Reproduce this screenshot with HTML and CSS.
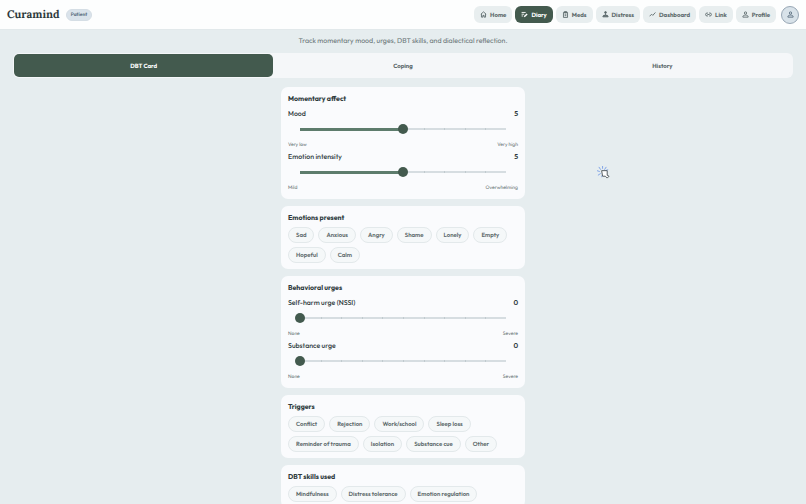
FILE: index.html
```
<!DOCTYPE html>
<html lang="en">
<head>
  <meta charset="UTF-8">
  <meta name="viewport" content="width=device-width, initial-scale=1.0">
  <title>Curamind - Diary</title>
  <link rel="stylesheet" href="styles.css">
</head>
<body>
  <header class="topbar">
    <div class="brand">
      <span class="brand-name">Curamind</span>
      <span class="role">Patient</span>
    </div>
    <nav class="nav">
      <a href="#home"><svg viewBox="0 0 24 24"><path d="M3 11l9-8 9 8M5 10v11h5v-6h4v6h5V10"/></svg>Home</a>
      <a href="#diary" class="active"><svg viewBox="0 0 24 24"><path d="M2 5h14M2 11h9M2 17h5"/><path class="pen" d="M11 20l10-10"/></svg>Diary</a>
      <a href="#meds"><svg viewBox="0 0 24 24"><path d="M5 5h14v17H5zM8 2h8v4H8zM9 11h6M9 16h6"/></svg>Meds</a>
      <a href="#distress"><svg viewBox="0 0 24 24"><circle class="solid" cx="12" cy="5" r="3"/><path d="M12 8v8"/><path class="solid" d="M3 20c0-4 3-6 6-6l3 3 3-3c3 0 6 2 6 6z"/></svg>Distress</a>
      <a href="#dashboard"><svg viewBox="0 0 24 24"><path d="M2 18l7-7 4 4 9-10"/></svg>Dashboard</a>
      <a href="#link"><svg viewBox="0 0 24 24"><path d="M10 7H7a5 5 0 0 0 0 10h3M14 7h3a5 5 0 0 1 0 10h-3M8 12h8"/></svg>Link</a>
      <a href="#profile"><svg viewBox="0 0 24 24"><circle cx="12" cy="7" r="4"/><path d="M3 21v-2c0-3 5-5 9-5s9 2 9 5v2z"/></svg>Profile</a>
      <button type="button" class="avatar" aria-label="Account"><svg viewBox="0 0 24 24"><circle cx="12" cy="7" r="4"/><path d="M3 21v-2c0-3 5-5 9-5s9 2 9 5v2z"/></svg></button>
    </nav>
  </header>

  <main>
    <p class="intro">Track momentary mood, urges, DBT skills, and dialectical reflection.</p>
    <div class="tabs" role="tablist">
      <button type="button" role="tab" aria-selected="true">DBT Card</button>
      <button type="button" role="tab" aria-selected="false">Coping</button>
      <button type="button" role="tab" aria-selected="false">History</button>
    </div>

    <div class="cards">
      <section class="card">
        <h2>Momentary affect</h2>
        <div class="field">
          <div class="field-head"><label for="mood">Mood</label><output for="mood">5</output></div>
          <input type="range" id="mood" min="0" max="10" value="5" style="--fill: 50%">
          <div class="scale"><span>Very low</span><span>Very high</span></div>
        </div>
        <div class="field">
          <div class="field-head"><label for="intensity">Emotion intensity</label><output for="intensity">5</output></div>
          <input type="range" id="intensity" min="0" max="10" value="5" style="--fill: 50%">
          <div class="scale"><span>Mild</span><span>Overwhelming</span></div>
        </div>
      </section>

      <section class="card">
        <h2>Emotions present</h2>
        <div class="chips">
          <button type="button">Sad</button>
          <button type="button">Anxious</button>
          <button type="button">Angry</button>
          <button type="button">Shame</button>
          <button type="button">Lonely</button>
          <button type="button">Empty</button>
          <button type="button">Hopeful</button>
          <button type="button">Calm</button>
        </div>
      </section>

      <section class="card">
        <h2>Behavioral urges</h2>
        <div class="field">
          <div class="field-head"><label for="nssi">Self-harm urge (NSSI)</label><output for="nssi">0</output></div>
          <input type="range" id="nssi" min="0" max="10" value="0" style="--fill: 0%">
          <div class="scale"><span>None</span><span>Severe</span></div>
        </div>
        <div class="field">
          <div class="field-head"><label for="substance">Substance urge</label><output for="substance">0</output></div>
          <input type="range" id="substance" min="0" max="10" value="0" style="--fill: 0%">
          <div class="scale"><span>None</span><span>Severe</span></div>
        </div>
      </section>

      <section class="card">
        <h2>Triggers</h2>
        <div class="chips">
          <button type="button">Conflict</button>
          <button type="button">Rejection</button>
          <button type="button">Work/school</button>
          <button type="button">Sleep loss</button>
          <button type="button">Reminder of trauma</button>
          <button type="button">Isolation</button>
          <button type="button">Substance cue</button>
          <button type="button">Other</button>
        </div>
      </section>

      <section class="card">
        <h2>DBT skills used</h2>
        <div class="chips">
          <button type="button">Mindfulness</button>
          <button type="button">Distress tolerance</button>
          <button type="button">Emotion regulation</button>
        </div>
      </section>
    </div>
  </main>

  <svg class="pointer" viewBox="0 0 14 14" aria-hidden="true">
    <path class="rays" d="M6 0v3M2 1l2 3M0 5l3 1M1 10l3-2M10 1L8 4M12 4L9 5M5 12l1-3"/>
    <path class="hand" d="M5 5h6v5l2 1-2 2-2-2H6z"/>
  </svg>
</body>
</html>
```
FILE: styles.css
```
* {
  box-sizing: border-box;
}

body {
  margin: 0;
  background: #e6edef;
  color: #2e3a3c;
  font-family: Outfit, Lato, "Open Sans", sans-serif;
  font-size: 6px;
  line-height: 10px;
  text-rendering: geometricPrecision;
}

button {
  font: inherit;
  color: inherit;
  text-rendering: inherit;
  cursor: pointer;
}

.topbar {
  display: flex;
  align-items: center;
  justify-content: space-between;
  height: 30px;
  padding: 0 7px;
  background: #fdfefe;
  border-bottom: 1px solid #e2e9eb;
}

.brand {
  display: flex;
  align-items: center;
  gap: 6px;
}

.brand-name {
  font-family: Lora, "Liberation Serif", serif;
  font-size: 11px;
  line-height: 16px;
  font-weight: 700;
}

.role {
  padding: 0 4px;
  border: 1px solid #d5dee5;
  border-radius: 6px;
  background: #dae3eb;
  color: #566a7c;
  font-size: 5px;
  font-weight: 600;
}

.nav {
  display: flex;
  align-items: center;
  gap: 3px;
}

.nav a {
  display: flex;
  align-items: center;
  gap: 3px;
  height: 17px;
  padding: 0 6px;
  border-radius: 6px;
  background: #e8eeef;
  color: #5c696b;
  font-weight: 700;
  text-decoration: none;
}

.nav a.active {
  background: #435a4e;
  color: #fff;
}

.nav svg {
  width: 7px;
  height: 7px;
  fill: none;
  stroke: currentColor;
  stroke-width: 3;
}

.nav .solid {
  fill: currentColor;
}

.nav .pen {
  stroke-width: 5;
}

.avatar {
  display: flex;
  align-items: center;
  justify-content: center;
  width: 18px;
  height: 18px;
  margin-left: 2px;
  padding: 0;
  border: 1px solid #98a7b5;
  border-radius: 50%;
  background: #d8e2e9;
  color: #566a7c;
}

main {
  padding: 6px 13px 12px;
}

.intro {
  margin: 0 0 7px;
  color: #687476;
  font-size: 7px;
  text-align: center;
}

.tabs {
  display: grid;
  grid-template-columns: repeat(3, 1fr);
  padding: 1px;
  border-radius: 6px;
  background: #f5f7f9;
}

.tabs button {
  height: 23px;
  padding: 0;
  border: 0;
  border-radius: 5px;
  background: none;
  color: #5c696b;
  font-weight: 700;
}

.tabs button[aria-selected="true"] {
  background: #435a4e;
  color: #fff;
}

.cards {
  display: grid;
  gap: 7px;
  max-width: 244px;
  margin: 9px auto 0;
}

.card {
  padding: 7px 7px 6px;
  border-radius: 7px;
  background: #fafbfd;
}

.card h2 {
  margin: 0 0 4px;
  font-size: 7px;
  line-height: 10px;
  font-weight: 700;
}

.field-head,
.scale {
  display: flex;
  justify-content: space-between;
}

.field + .field {
  margin-top: 1px;
}

.field-head {
  font-size: 7px;
  line-height: 11px;
  font-weight: 500;
}

.field-head output {
  font-weight: 600;
}

.scale {
  color: #667274;
  font-size: 5px;
  line-height: 10px;
}

input[type="range"] {
  appearance: none;
  display: block;
  width: calc(100% - 14px);
  height: 10px;
  margin: 5px 7px 6px;
  background: none;
}

/* coloured part over a thin line with ten steps */
input[type="range"]::-webkit-slider-runnable-track {
  height: 10px;
  background:
    linear-gradient(#5d7c6c, #5d7c6c) 5px 4px / calc(var(--fill) - 5px) 3px no-repeat,
    repeating-linear-gradient(90deg, #c0cace 0 1px, transparent 1px 10%) 5px 4px / calc(100% - 10px) 2px no-repeat,
    linear-gradient(#d6dde1, #d6dde1) 5px 4px / calc(100% - 10px) 2px no-repeat;
}

input[type="range"]::-webkit-slider-thumb {
  appearance: none;
  width: 10px;
  height: 10px;
  border-radius: 50%;
  background: #435a4e;
}

.chips {
  display: flex;
  flex-wrap: wrap;
  gap: 4px;
}

.chips button {
  height: 16px;
  padding: 0 7px;
  border: 1px solid #e3e9eb;
  border-radius: 8px;
  background: #f5f8f9;
  color: #5c696b;
  font-weight: 600;
}

/* busy pointer floating over the page */
.pointer {
  position: absolute;
  top: 166px;
  left: 597px;
  width: 13px;
  height: 13px;
  fill: none;
}

.rays {
  stroke: #7ba0e6;
}

.hand {
  fill: #fff;
  stroke: #4e5557;
}
```
